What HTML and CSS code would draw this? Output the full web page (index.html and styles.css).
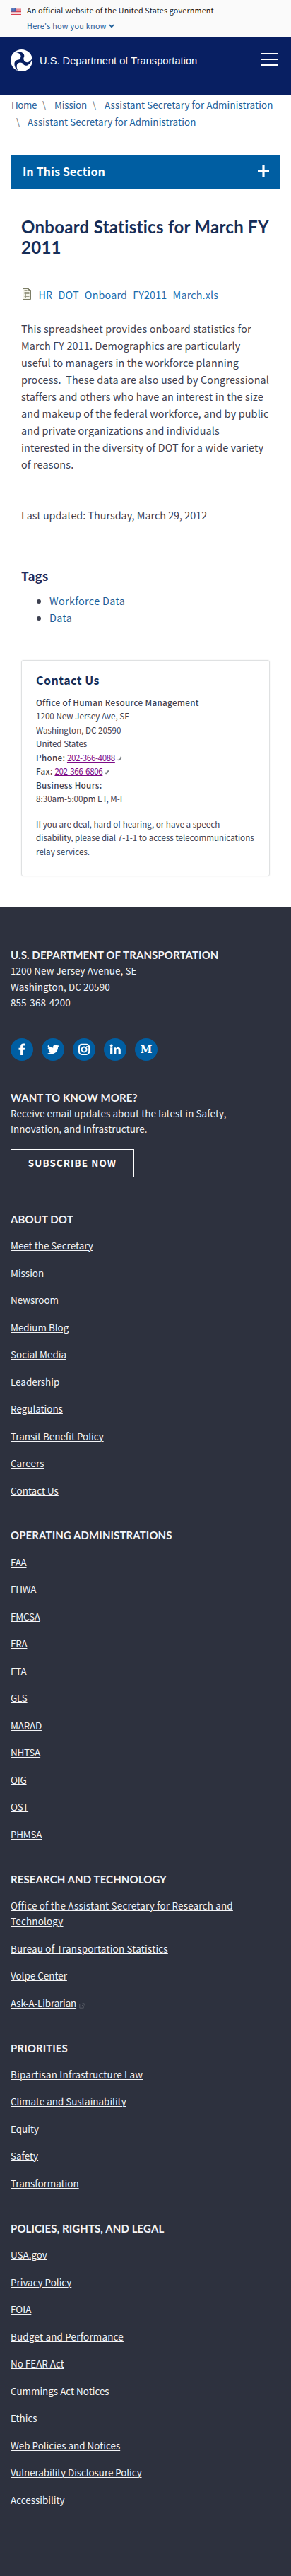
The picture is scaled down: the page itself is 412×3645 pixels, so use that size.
FILE: index.html
```
<!DOCTYPE html>
<html lang="en">
<head>
<meta charset="utf-8">
<title>Onboard Statistics for March FY 2011 | US Department of Transportation</title>
<link rel="stylesheet" href="styles.css">
</head>
<body>
<div class="banner">
  <svg class="flag" viewBox="0 0 15 10" width="15" height="10" aria-hidden="true">
    <rect width="15" height="10" fill="#f4dcdf"/>
    <path d="M0 .6h15M0 3h15M0 5.3h15M0 7.4h15M0 9.5h15" stroke="#d9404f" stroke-width="1.15"/>
    <rect width="7" height="5.6" fill="#3f62ae"/>
    <path d="M1 1.4h5M1 2.9h5M1 4.3h5" stroke="#9fb2dc" stroke-width=".6" stroke-dasharray=".8 .7"/>
  </svg>
  <div class="banner-text">
    <p>An official website of the United States government</p>
    <p class="banner-toggle"><a href="#">Here's how you know</a><svg viewBox="0 0 8 6" width="8" height="6" aria-hidden="true"><path d="M1 1.2l3 3 3-3" fill="none" stroke="#1f5f99" stroke-width="1.9"/></svg></p>
  </div>
</div>

<header class="header">
  <a class="brand" href="#">
    <svg viewBox="-15.5 -15.5 31 31" width="31" height="31" aria-hidden="true">
      <circle r="15.5" fill="#fff"/>
      <g fill="#081f62">
        <path id="arm" d="M-10.4-11.8C-3.5-14 4-11.5 3.8-6.500C3.700-4.800 2.900-4 2.740-2.340L0 2L-3.400-1.200C-1.900-2.400-.9-4-1-6.300C-1.200-9.200-4.800-11.400-10.400-11.800Z"/>
        <use href="#arm" transform="rotate(120)"/>
        <use href="#arm" transform="rotate(240)"/>
      </g>
    </svg>
    <span>U.S. Department of Transportation</span>
  </a>
  <button class="menu" aria-label="Menu"><i></i><i></i><i></i></button>
</header>

<nav class="crumbs">
  <a class="home" href="#">Home</a><b>\</b><a class="short" href="#">Mission</a><b>\</b><a href="#">Assistant Secretary for Administration</a><br>
  <b class="wrapped">\</b><a href="#">Assistant Secretary for Administration</a>
</nav>

<div class="section-bar">
  <span>In This Section</span>
  <svg viewBox="0 0 16 16" width="16" height="16" aria-hidden="true"><path d="M8 0v16M0 8h16" stroke="#fff" stroke-width="3.2"/></svg>
</div>

<main class="main">
  <h1>Onboard Statistics for March FY 2011</h1>
  <p class="file">
    <svg viewBox="0 0 12 16" width="12" height="16" aria-hidden="true">
      <path d="M.5.5h8l3 3v12H.5z" fill="#f5f5ec" stroke="#7c7d66"/>
      <path d="M8.5.5v3h3" fill="none" stroke="#7c7d66"/>
      <path d="M2.5 3.5h4M2.5 5.5h7M2.5 7.5h7M2.5 9.5h7M2.5 11.5h7M2.5 13.5h7" stroke="#a0a08c"/>
      <path d="M4.5 5v9" stroke="#8d8e7a" stroke-width=".8"/>
    </svg>
    <a href="#">HR_DOT_Onboard_FY2011_March.xls</a>
  </p>
  <p class="body">This spreadsheet provides onboard statistics for<br>March FY 2011. Demographics are particularly<br>useful to managers in the workforce planning<br>process.&nbsp; These data are also used by Congressional<br>staffers and others who have an interest in the size<br>and makeup of the federal workforce, and by public<br>and private organizations and individuals<br>interested in the diversity of DOT for a wide variety<br>of reasons.</p>
  <p class="updated">Last updated: Thursday, March 29, 2012</p>
  <h2>Tags</h2>
  <ul class="tags">
    <li><a href="#">Workforce Data</a></li>
    <li><a href="#">Data</a></li>
  </ul>
  <section class="card">
    <h2>Contact Us</h2>
    <p><strong>Office of Human Resource Management</strong><br>1200 New Jersey Ave, SE<br>Washington, DC 20590<br>United States<br><strong>Phone:</strong> <a href="#">202-366-4088</a><svg class="tel" viewBox="0 0 7 7" width="7" height="7" aria-hidden="true"><path d="M.3 4.6L2 6.4C4.600 5.600 5.800 4 6.300 1.800L4.700.6L4 2.400C3.700 3.600 3 4.300 2 4.700z" fill="#777b80"/></svg><br><strong>Fax:</strong> <a href="#">202-366-6806</a><svg class="tel" viewBox="0 0 7 7" width="7" height="7" aria-hidden="true"><path d="M.3 4.6L2 6.4C4.600 5.600 5.800 4 6.300 1.800L4.700.6L4 2.400C3.700 3.600 3 4.300 2 4.700z" fill="#777b80"/></svg><br><strong>Business Hours:</strong><br>8:30am-5:00pm ET, M-F</p>
    <p class="relay">If you are deaf, hard of hearing, or have a speech<br>disability, please dial 7-1-1 to access telecommunications<br>relay services.</p>
  </section>
</main>

<footer class="footer">
  <h3>U.S. Department of Transportation</h3>
  <p>1200 New Jersey Avenue, SE<br>Washington, DC 20590<br>855-368-4200</p>
  <div class="social">
    <a href="#" aria-label="Facebook"><svg viewBox="0 0 32 32" width="32" height="32"><path d="M14.100 24v-7.300h-2.600v-3h2.600v-2.200c0-2.700 1.600-4.100 4-4.100 1.100 0 1.700.1 2.200.2v2.800h-1.500c-1.300 0-1.600.7-1.600 1.500v1.800h3l-.4 3h-2.600V24z"/></svg></a>
    <a href="#" aria-label="Twitter"><svg viewBox="0 0 32 32" width="32" height="32"><path transform="translate(8 7.500) scale(.7)" d="M24 4.600a10 10 0 0 1-2.800.8 5 5 0 0 0 2.100-2.700 10 10 0 0 1-3.100 1.200 4.900 4.900 0 0 0-8.400 4.500A14 14 0 0 1 1.700 3.100a4.900 4.900 0 0 0 1.500 6.600 4.900 4.900 0 0 1-2.200-.6 4.900 4.900 0 0 0 3.900 4.900 5 5 0 0 1-2.200.1 4.900 4.900 0 0 0 4.600 3.400A9.900 9.900 0 0 1 0 19.500a14 14 0 0 0 21.500-12.400A10 10 0 0 0 24 4.600z"/></svg></a>
    <a href="#" aria-label="Instagram"><svg viewBox="0 0 32 32" width="32" height="32"><rect x="9" y="8.800" width="14.200" height="14.200" rx="3.800" fill="none" stroke="#fff" stroke-width="2"/><circle cx="16.100" cy="15.900" r="3.500" fill="none" stroke="#fff" stroke-width="2"/><circle cx="20" cy="12" r="1"/></svg></a>
    <a href="#" aria-label="LinkedIn"><svg viewBox="0 0 32 32" width="32" height="32"><circle cx="10.700" cy="10.300" r="1.900"/><path d="M9.100 13.300h3.200V22.600H9.100zM14.200 13.300h3v1.300c.5-.9 1.500-1.600 3-1.600 2.800 0 3.600 1.700 3.600 4.200v5.400h-3.200v-4.900c0-1.100-.2-2.100-1.500-2.100-1.300 0-1.700 1-1.700 2.200v4.800h-3.200z"/></svg></a>
    <a class="medium" href="#" aria-label="Medium">M</a>
  </div>
  <h3>Want to know more?</h3>
  <p>Receive email updates about the latest in Safety,<br>Innovation, and Infrastructure.</p>
  <a class="subscribe" href="#">SUBSCRIBE NOW</a>

  <nav class="groups">
    <h3>About DOT</h3>
    <ul>
      <li><a href="#">Meet the Secretary</a></li>
      <li><a href="#">Mission</a></li>
      <li><a href="#">Newsroom</a></li>
      <li><a href="#">Medium Blog</a></li>
      <li><a href="#">Social Media</a></li>
      <li><a href="#">Leadership</a></li>
      <li><a href="#">Regulations</a></li>
      <li><a href="#">Transit Benefit Policy</a></li>
      <li><a href="#">Careers</a></li>
      <li><a href="#">Contact Us</a></li>
    </ul>
    <h3>Operating Administrations</h3>
    <ul class="acronyms">
      <li><a href="#">FAA</a></li>
      <li><a href="#">FHWA</a></li>
      <li><a href="#">FMCSA</a></li>
      <li><a href="#">FRA</a></li>
      <li><a href="#">FTA</a></li>
      <li><a href="#">GLS</a></li>
      <li><a href="#">MARAD</a></li>
      <li><a href="#">NHTSA</a></li>
      <li><a href="#">OIG</a></li>
      <li><a href="#">OST</a></li>
      <li><a href="#">PHMSA</a></li>
    </ul>
    <h3>Research and Technology</h3>
    <ul>
      <li><a class="wide" href="#">Office of the Assistant Secretary for Research and<br>Technology</a></li>
      <li><a class="wide" href="#">Bureau of Transportation Statistics</a></li>
      <li><a href="#">Volpe Center</a></li>
      <li><a class="librarian" href="#">Ask-A-Librarian</a><svg class="ext" viewBox="0 0 8 8" width="8" height="8" aria-hidden="true"><path d="M3.500 1.500H.8v5.700h5.400V5M4.500.8h2.700v2.700M7 1L3.500 4.500" fill="none" stroke="#5a5e69" stroke-width=".9"/></svg></li>
    </ul>
    <h3>Priorities</h3>
    <ul>
      <li><a class="wide" href="#">Bipartisan Infrastructure Law</a></li>
      <li><a href="#">Climate and Sustainability</a></li>
      <li><a href="#">Equity</a></li>
      <li><a href="#">Safety</a></li>
      <li><a href="#">Transformation</a></li>
    </ul>
    <h3>Policies, Rights, and Legal</h3>
    <ul>
      <li><a href="#">USA.gov</a></li>
      <li><a href="#">Privacy Policy</a></li>
      <li><a href="#">FOIA</a></li>
      <li><a class="wide" href="#">Budget and Performance</a></li>
      <li><a href="#">No FEAR Act</a></li>
      <li><a href="#">Cummings Act Notices</a></li>
      <li><a href="#">Ethics</a></li>
      <li><a href="#">Web Policies and Notices</a></li>
      <li><a class="policy" href="#">Vulnerability Disclosure Policy</a></li>
      <li><a href="#">Accessibility</a></li>
    </ul>
  </nav>
</footer>
</body>
</html>
```
FILE: styles.css
```
* { box-sizing: border-box; }

body {
  margin: 0;
  background: #fff;
  color: #3d4050;
  font-family: "Noto Sans CJK SC", "Open Sans", sans-serif;
  font-size: 14.35px;
  line-height: 24px;
}

h1, h2, h3, p, ul { margin: 0; padding: 0; }

a {
  color: #1f5f99;
  text-decoration: underline 1px;
  text-underline-offset: 1px;
}

/* Government banner */
.banner {
  display: flex;
  gap: 8px;
  height: 52px;
  padding: 4px 15px 0;
  background: #fafafa;
  color: #1b1b1b;
  font-size: 10.75px;
  line-height: 22px;
  letter-spacing: .19px;
}
.flag { margin-top: 7px; }
.banner-toggle { display: flex; align-items: center; gap: 3px; letter-spacing: .32px; }

/* Header */
.header {
  display: flex;
  justify-content: space-between;
  align-items: flex-start;
  height: 82px;
  padding: 18px 19px 0 15px;
  background: #081f62;
}
.brand {
  display: flex;
  align-items: center;
  gap: 10px;
  color: #fff;
  font-family: "Liberation Sans", Arial, sans-serif;
  font-size: 14.66px;
  line-height: 30px;
  text-decoration: none;
}
.menu {
  display: grid;
  gap: 6px;
  width: 24px;
  margin-top: 5px;
  padding: 0;
  border: 0;
  background: none;
}
.menu i { height: 2px; background: #fff; }

/* Breadcrumbs */
.crumbs {
  height: 85px;
  padding: 3px 16px 0;
  font-size: 13.4px;
  line-height: 23.5px;
  letter-spacing: .1px;
  white-space: nowrap;
}
.crumbs .home { letter-spacing: -.4px; }
.crumbs .short { letter-spacing: -.16px; }
.crumbs b {
  display: inline-block;
  width: 25px;
  padding-left: 8px;
  color: #71767a;
  font-weight: 400;
}
.crumbs .wrapped { width: 23px; padding-left: 7px; }

.section-bar {
  display: flex;
  justify-content: space-between;
  align-items: center;
  height: 48px;
  margin: 0 15px;
  padding: 0 16px 2px 17px;
  background: #005ea2;
  color: #fff;
  font-size: 16.25px;
  font-weight: 700;
}

/* Article */
.main { padding: 39px 30px 44px; }
h1 {
  color: #162e58;
  font: 700 24px/29px Lato, sans-serif;
  letter-spacing: .28px;
  margin-right: -5px;
}
.file {
  display: flex;
  align-items: center;
  gap: 10.5px;
  margin-top: 41px;
  padding-left: 2px;
  white-space: nowrap;
}
.file svg { margin-top: -2px; }
.file a { color: #1a6cad; letter-spacing: .15px; }
.body { margin-top: 24px; letter-spacing: .15px; white-space: nowrap; }
.updated { margin-top: 48px; }
.main h2 { margin-top: 62px; color: #1f2b5c; font-size: 17.2px; }
.tags { margin-top: 11px; padding-left: 40px; letter-spacing: .35px; }

.card {
  height: 306px;
  margin: 48px 0 0;
  padding: 18px 0 0 20px;
  border: 1px solid #dfe1e2;
  border-radius: 3px;
  box-shadow: 0 0 2px #ececec;
  font-size: 11.64px;
  line-height: 19.5px;
  white-space: nowrap;
}
.main .card h2 { margin: 0 0 11px; color: #162e58; font-size: 16.1px; letter-spacing: .45px; }
.card strong { font-weight: 500; letter-spacing: .35px; }
.card a { color: #7d0a86; letter-spacing: -.39px; }
.card .relay { margin-top: 16px; }
.tel { margin-left: 3px; }

/* Footer */
.footer {
  height: 2361px;
  padding: 56px 15px 0;
  background: #2d313e;
  color: #f3f4f7;
  font-size: 13.43px;
  line-height: 22.4px;
}
.footer h3 {
  font: 700 15px/22.4px Lato, sans-serif;
  letter-spacing: .1px;
  text-transform: uppercase;
}
.footer p { letter-spacing: .09px; }
.social { display: flex; gap: 12px; margin: 39px 0 41px; }
.social a {
  width: 32px;
  height: 32px;
  border-radius: 50%;
  background: #005ea2;
  fill: #fff;
}
.social svg { display: block; }
.social .medium {
  color: #fff;
  font: 700 15px/32px "DejaVu Serif", serif;
  text-align: center;
  text-decoration: none;
}
.subscribe {
  display: block;
  width: 175px;
  height: 40px;
  margin-top: 17px;
  border: 1px solid #fff;
  color: #fff;
  font-weight: 700;
  line-height: 37px;
  letter-spacing: 1.1px;
  text-align: center;
  text-decoration: none;
}
.groups { margin-top: 48px; line-height: 22.5px; }
.groups ul { margin: 14.9px 0 25.3px; list-style: none; }
.groups li { padding-bottom: 16px; }
.groups a { color: #f3f4f7; }
.groups .wide { letter-spacing: .2px; }
.groups .policy { letter-spacing: -.06px; }
.groups .librarian { letter-spacing: -.15px; }
.groups .acronyms { letter-spacing: -.2px; }
.ext { margin-left: 4px; vertical-align: -2px; }
```
